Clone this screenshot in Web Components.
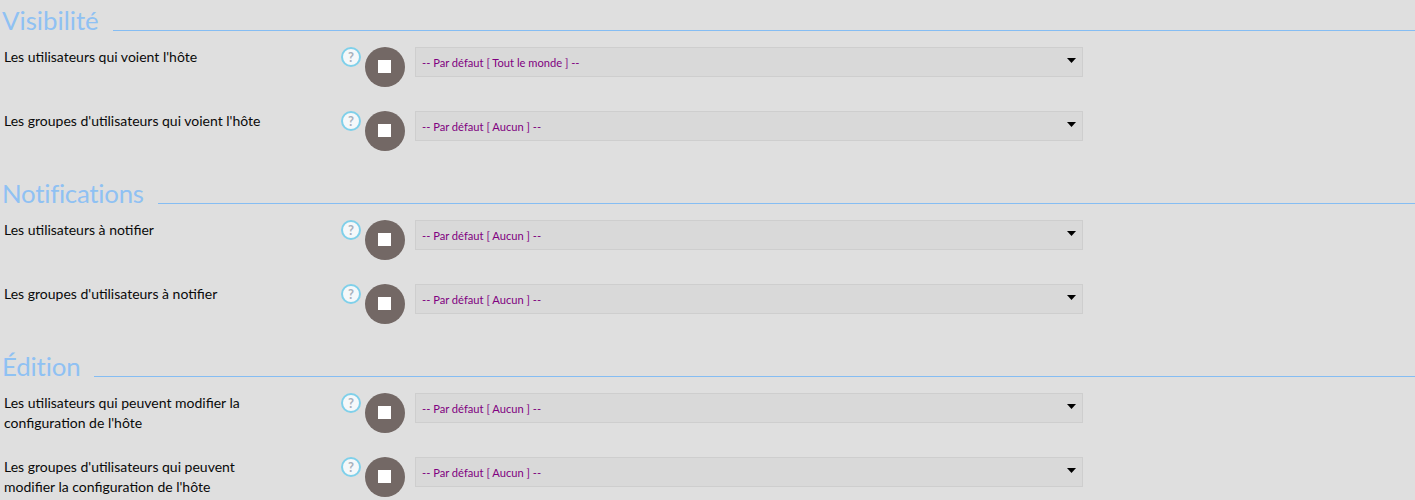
<!DOCTYPE html>
<html lang="fr">
<head>
<meta charset="utf-8">
<title>Hôte</title>
<style>
   html, body { margin: 0; background: #dfdfdf; }
   body { font-family: Lato, sans-serif; height: 500px; overflow: hidden; }
</style>
</head>
<body>
<form-section heading="Visibilité">
   <form-row default-text="-- Par défaut [ Tout le monde ] --">Les utilisateurs qui voient l'hôte</form-row>
   <form-row default-text="-- Par défaut [ Aucun ] --">Les groupes d'utilisateurs qui voient l'hôte</form-row>
</form-section>
<form-section heading="Notifications" style="--heading-spacing: -0.25px">
   <form-row default-text="-- Par défaut [ Aucun ] --">Les utilisateurs à notifier</form-row>
   <form-row default-text="-- Par défaut [ Aucun ] --">Les groupes d'utilisateurs à notifier</form-row>
</form-section>
<form-section heading="Édition" style="--heading-spacing: -0.15px">
   <form-row default-text="-- Par défaut [ Aucun ] --">Les utilisateurs qui peuvent modifier la configuration de l'hôte</form-row>
   <form-row default-text="-- Par défaut [ Aucun ] --">Les groupes d'utilisateurs qui peuvent modifier la configuration de l'hôte</form-row>
</form-section>

<script>
const sectionTmpl = document.createElement("template");
sectionTmpl.innerHTML = `
   <style>
      :host {
         display: block;
         padding-bottom: 22px;
      }
      header {
         display: flex;
         align-items: flex-end;
         gap: 14px;
         height: 31px;
         margin-bottom: 16px;
      }
      h2 {
         margin: 0 0 -7px 2px;
         font: 400 25.8px/36px Lato, sans-serif;
         letter-spacing: var(--heading-spacing, 0);
         color: #8fc1f3;
         white-space: nowrap;
      }
      i {
         flex: 1;
         height: 1px;
         background: #85bdf3;
      }
      #rows {
         display: flex;
         flex-direction: column;
         gap: 24px;
      }
   </style>
   <header><h2></h2><i></i></header>
   <div id="rows"><slot></slot></div>
`;

class FormSection extends HTMLElement {
   constructor() {
      super();
      this.attachShadow({ mode: "open" });
      this.shadowRoot.appendChild(sectionTmpl.content.cloneNode(true));
      this.shadowRoot.querySelector("h2").textContent = this.getAttribute("heading");
   }
}

const rowTmpl = document.createElement("template");
rowTmpl.innerHTML = `
   <style>
      :host {
         display: flex;
         height: 40px;
         color: #0a0a0a;
         font: 14px/20px Lato, sans-serif;
      }
      #label {
         box-sizing: border-box;
         width: 341px;
         padding: 0 71px 0 4px;
      }
      #help { margin-right: 4px; }
      #toggle { margin-right: 10px; }
   </style>
   <div id="label"><slot></slot></div>
   <help-badge id="help"></help-badge>
   <stop-button id="toggle"></stop-button>
   <select-box></select-box>
`;

class FormRow extends HTMLElement {
   constructor() {
      super();
      this.attachShadow({ mode: "open" });
      this.shadowRoot.appendChild(rowTmpl.content.cloneNode(true));
      this.shadowRoot.querySelector("select-box").textContent = this.getAttribute("default-text");
   }
}

class HelpBadge extends HTMLElement {
   constructor() {
      super();
      this.attachShadow({ mode: "open" }).innerHTML = `
         <style>
            :host {
               box-sizing: border-box;
               display: flex;
               align-items: center;
               justify-content: center;
               width: 20px;
               height: 20px;
               border: 2px solid #7fd0ea;
               border-radius: 50%;
               background: #f5f8fa;
               color: #a8b0bc;
               font: 700 13px/1 Lato, sans-serif;
            }
         </style>
         ?
      `;
   }
}

class StopButton extends HTMLElement {
   constructor() {
      super();
      this.attachShadow({ mode: "open" }).innerHTML = `
         <style>
            :host {
               box-sizing: border-box;
               display: flex;
               align-items: center;
               justify-content: center;
               width: 40px;
               height: 40px;
               padding: 0 1px 1px 0;
               border-radius: 50%;
               background: #736865;
            }
            div { width: 13px; height: 13px; background: #fff; }
         </style>
         <div></div>
      `;
   }
}

class SelectBox extends HTMLElement {
   constructor() {
      super();
      this.attachShadow({ mode: "open" }).innerHTML = `
         <style>
            :host {
               box-sizing: border-box;
               display: flex;
               align-items: center;
               justify-content: space-between;
               width: 668px;
               height: 30px;
               padding: 1px 6px 0 6px;
               border: 1px solid #cecece;
               background: #d9d9d9;
               color: #800080;
               font: 11.15px/28px Lato, sans-serif;
            }
            svg { display: block; margin-top: -4px; }
         </style>
         <slot></slot>
         <svg width="9" height="5" viewBox="0 0 9 5"><path d="M0 0h9L4.5 5z" fill="#000"/></svg>
      `;
   }
}

customElements.define("help-badge", HelpBadge);
customElements.define("stop-button", StopButton);
customElements.define("select-box", SelectBox);
customElements.define("form-row", FormRow);
customElements.define("form-section", FormSection);
</script>
</body>
</html>
